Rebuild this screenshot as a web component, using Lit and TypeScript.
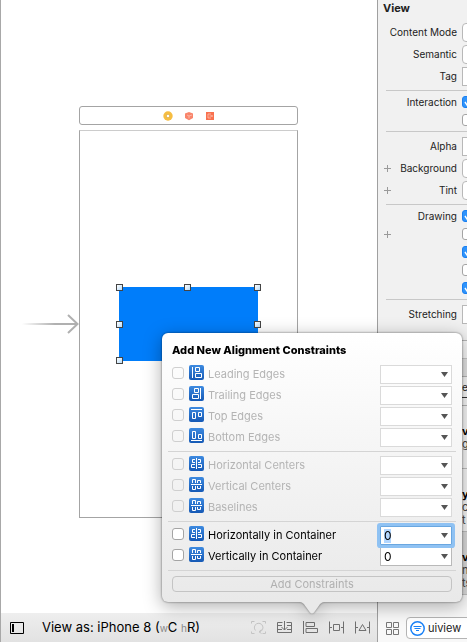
import { LitElement, html, css, svg, nothing } from "lit";
import { customElement, property } from "lit/decorators.js";

type Glyph = "leading" | "trailing" | "top" | "bottom" | "hcenter" | "vcenter";

const GLYPHS: Record<Glyph, string> = {
  leading: "M3.5 2V13M6.5 2.5H10.5V6.5H6.5ZM6.5 8.5H12.5V12.5H6.5Z",
  trailing: "M11.5 2V13M5.5 2.5H9.5V6.5H5.5ZM3.5 8.5H9.5V12.5H3.5Z",
  top: "M2 2.5H13M3.5 5.5H6.5V11.5H3.5ZM9.5 5.5H12.5V9.5H9.5Z",
  bottom: "M2 12.5H13M3.5 3.5H6.5V10.5H3.5ZM9.5 6.5H12.5V10.5H9.5Z",
  hcenter: "M7.5 2V13M6 3.5H3.5V6.5H6M6 8.5H2.5V11.5H6M9 3.5H11.5V6.5H9M9 8.5H12.5V11.5H9",
  vcenter: "M2 7.5H13M3.5 6V2.5H6.5V6M8.5 6V3.5H11.5V6M3.5 9V12.5H6.5V9M8.5 9V11.5H11.5V9",
};

interface Constraint {
  id: string;
  label: string;
  glyph: Glyph;
  value?: string;
  focused?: boolean;
}

const GROUPS: Constraint[][] = [
  [
    { id: "leading", label: "Leading Edges", glyph: "leading" },
    { id: "trailing", label: "Trailing Edges", glyph: "trailing" },
    { id: "top", label: "Top Edges", glyph: "top" },
    { id: "bottom", label: "Bottom Edges", glyph: "bottom" },
  ],
  [
    { id: "hcenters", label: "Horizontal Centers", glyph: "hcenter" },
    { id: "vcenters", label: "Vertical Centers", glyph: "vcenter" },
    { id: "baselines", label: "Baselines", glyph: "vcenter" },
  ],
  [
    { id: "hcontainer", label: "Horizontally in Container", glyph: "hcenter", value: "0", focused: true },
    { id: "vcontainer", label: "Vertically in Container", glyph: "vcenter", value: "0" },
  ],
];

const checkStyles = css`
  .check {
    appearance: none;
    box-sizing: border-box;
    flex: none;
    width: 12px;
    height: 12px;
    margin: 0;
    border: 1px solid #a4a4a4;
    border-radius: 3px;
    background: #fff;
  }
`;

@customElement("constraint-popover")
export class ConstraintPopover extends LitElement {
  static styles = [
    checkStyles,
    css`
      :host {
        display: block;
        filter: drop-shadow(0 0 1px rgba(0, 0, 0, 0.5)) drop-shadow(0 4px 9px rgba(0, 0, 0, 0.32));
        font-size: 11px;
        line-height: 14px;
        color: #000;
      }
      .panel {
        padding: 10px 6px;
        border-radius: 6px;
        background: linear-gradient(#fff, #f6f6f6 40%, #e9e9e9);
      }
      h2 {
        margin: 0 4px 7px;
        font-size: 11px;
        line-height: 14px;
        font-weight: 800;
        white-space: nowrap;
      }
      .group {
        padding-bottom: 3px;
        margin-bottom: 3px;
        border-bottom: 1px solid #d4d4d4;
      }
      .row {
        box-sizing: border-box;
        display: flex;
        align-items: flex-start;
        height: 21px;
        padding: 1px 4px;
      }
      .row label {
        display: flex;
        flex: 1;
        align-items: flex-start;
        gap: 4px;
        line-height: 18px;
        white-space: nowrap;
      }
      .row .check {
        margin: 2px 5px 0 0;
      }
      .off label {
        color: #b4b4b4;
      }
      .off .check {
        border-color: #cfcfcf;
        background: transparent;
      }
      .glyph {
        flex: none;
        width: 15px;
        height: 15px;
        border-radius: 2px;
        background: linear-gradient(#3d8ae0, #1559b5);
      }
      .combo {
        box-sizing: border-box;
        display: flex;
        align-items: center;
        width: 72px;
        height: 19px;
        border: 1px solid #b9b9b9;
        background: #fff;
        font-size: 12px;
      }
      .off .combo {
        border-color: #dadada;
      }
      .focused {
        border-color: #6aa7e0;
        border-radius: 1px;
        box-shadow: 0 0 0 3px #8fc2f3;
        position: relative;
      }
      .combo input {
        flex: 1;
        min-width: 0;
        padding: 0 3px;
        border: 0;
        outline: 0;
        background: none;
        font: inherit;
        color: #000;
      }
      .focused input {
        background: linear-gradient(#b3d7ff, #b3d7ff) 3px 0 / 7px 100% no-repeat;
      }
      .combo button {
        display: flex;
        padding: 0 3px;
        border: 0;
        background: none;
      }
      .add {
        display: block;
        box-sizing: border-box;
        width: calc(100% - 8px);
        height: 16px;
        margin: 5px 4px 0;
        padding: 0;
        border: 1px solid #c4c4c4;
        border-radius: 4px;
        background: none;
        font: inherit;
        color: #b0b0b0;
      }
      .group:last-of-type {
        margin-bottom: 0;
      }
      .tail {
        display: block;
        margin: 0 auto;
      }
    `,
  ];

  private row(c: Constraint) {
    const off = c.value === undefined;
    return html`
      <div class="row ${off ? "off" : ""}">
        <input class="check" type="checkbox" id=${c.id} ?disabled=${off} />
        <label for=${c.id}>
          <svg class="glyph" viewBox="0 0 15 15" aria-hidden="true">
            <path d=${GLYPHS[c.glyph]} fill="none" stroke="#fff" />
          </svg>
          ${c.label}
        </label>
        <div class="combo ${c.focused ? "focused" : ""}">
          <input type="text" aria-label="${c.label} value" .value=${c.value ?? ""} ?disabled=${off} />
          <button type="button" aria-label="${c.label} options" ?disabled=${off}>
            <svg width="7" height="5" viewBox="0 0 7 5"><path d="M0 0H7L3.5 5Z" fill="#555" /></svg>
          </button>
        </div>
      </div>
    `;
  }

  render() {
    return html`
      <div class="panel">
        <h2>Add New Alignment Constraints</h2>
        ${GROUPS.map((g) => html`<div class="group">${g.map((c) => this.row(c))}</div>`)}
        <button class="add" type="button" disabled>Add Constraints</button>
      </div>
      <svg class="tail" width="28" height="12" viewBox="0 0 28 12" aria-hidden="true">
        <path d="M0 0C5 0 6 2 8 5L12 10.500Q14 12.500 16 10.500L20 5C22 2 23 0 28 0Z" fill="#e9e9e9" />
      </svg>
    `;
  }
}

type Kind = "select" | "text" | "on" | "off";
interface Attribute {
  label?: string;
  kind: Kind;
  plus?: boolean;
}

const SECTIONS: Attribute[][] = [
  [
    { label: "Content Mode", kind: "select" },
    { label: "Semantic", kind: "select" },
    { label: "Tag", kind: "text" },
  ],
  [{ label: "Interaction", kind: "on" }, { kind: "off" }],
  [
    { label: "Alpha", kind: "text" },
    { label: "Background", kind: "select", plus: true },
    { label: "Tint", kind: "select", plus: true },
  ],
  [{ label: "Drawing", kind: "on" }, { kind: "off", plus: true }, { kind: "on" }, { kind: "off" }, { kind: "on" }],
  [{ label: "Stretching", kind: "text" }],
];

@customElement("attributes-inspector")
export class AttributesInspector extends LitElement {
  static styles = [
    checkStyles,
    css`
      :host {
        display: flex;
        flex-direction: column;
        overflow: hidden;
        border-left: 1px solid #a0a0a0;
        background: #f1f1f1;
        font-size: 10px;
        line-height: 14px;
        color: #222;
      }
      h1 {
        margin: 0;
        height: 18px;
        padding-left: 5px;
        font-size: 11px;
        line-height: 17px;
        font-weight: 700;
      }
      section {
        margin-left: 8px;
        padding: 3px 0;
        border-bottom: 1px solid #c8c8c8;
      }
      section.checks {
        padding: 2px 0;
      }
      section.last {
        border: 0;
      }
      .row {
        display: flex;
        align-items: center;
        height: 22px;
      }
      .checks .row {
        height: 18px;
      }
      .plus {
        display: flex;
        flex: none;
        width: 7px;
        margin-left: -2px;
        padding: 0;
        border: 0;
        background: none;
      }
      .row label {
        flex: 1;
        text-align: right;
        white-space: nowrap;
      }
      .slot {
        flex: none;
        display: flex;
        width: 5px;
        margin-left: 5px;
      }
      .field {
        box-sizing: border-box;
        flex: none;
        appearance: none;
        width: 120px;
        height: 19px;
        border: 1px solid #b8b8b8;
        background: #fff;
      }
      select.field {
        border-radius: 4px;
      }
      .on {
        border-color: #1a7ff0;
        background: #2e93fb;
      }
      .box {
        display: grid;
      }
      .box > * {
        grid-area: 1 / 1;
      }
      .library {
        margin-top: 12px;
        border-top: 1px solid #b5b5b5;
      }
      .bar {
        height: 17px;
        background: #f8f8f8;
        border-bottom: 1px solid #c8c8c8;
      }
      .tabs {
        height: 17px;
        background: #e4e4e4;
        border-bottom: 1px solid #b5b5b5;
      }
      .preview {
        height: 7px;
        background: #f8f8f8;
        border-bottom: 1px solid #b5b5b5;
      }
      .link {
        display: block;
        height: 20px;
        padding-left: 84px;
        line-height: 20px;
        border-bottom: 1px solid #333;
        background: #f8f8f8;
        color: inherit;
        text-decoration: none;
      }
      .item {
        box-sizing: border-box;
        height: 63px;
        padding: 19px 0 0 84px;
        border-bottom: 1px solid #c0c0c0;
        font-size: 11px;
        line-height: 13px;
        color: #444;
        background: #f8f8f8;
      }
      .item strong {
        display: block;
        color: #000;
      }
      .item span {
        display: block;
      }
      .chosen {
        background: #dcdcdc;
      }
      .filter {
        flex: 1;
        display: flex;
        align-items: flex-end;
        padding: 0 0 3px 8px;
        background: #f8f8f8;
      }
      .grid {
        display: flex;
        flex: none;
        margin-bottom: 4px;
        padding: 0;
        border: 0;
        background: none;
      }
      .search {
        box-sizing: border-box;
        flex: none;
        display: flex;
        align-items: center;
        gap: 3px;
        width: 180px;
        height: 22px;
        margin-left: 7px;
        padding-left: 3px;
        border: 1px solid #b4b4b4;
        border-radius: 4px;
        background: #fff;
        font-size: 11px;
      }
      .search input {
        width: 120px;
        padding: 0;
        border: 0;
        outline: 0;
        background: none;
        font: inherit;
        color: #222;
      }
    `,
  ];

  private control(a: Attribute, id: string) {
    if (a.kind === "select") return html`<select class="field" id=${id}></select>`;
    if (a.kind === "text") return html`<input class="field" type="text" id=${id} />`;
    return html`
      <span class="box">
        <input class="check ${a.kind}" type="checkbox" id=${id} aria-label=${a.label ?? "Option"} ?checked=${a.kind === "on"} />
        ${a.kind === "on"
          ? svg`<svg width="12" height="12" viewBox="0 0 12 12" aria-hidden="true"><path d="M3 6L5 9L9 3" fill="none" stroke="#fff" stroke-width="1.500"/></svg>`
          : nothing}
      </span>
    `;
  }

  render() {
    return html`
      <h1>View</h1>
      ${SECTIONS.map((rows, s) => {
        const checks = rows[0].kind === "on";
        return html`
          <section class="${checks ? "checks" : ""} ${s === SECTIONS.length - 1 ? "last" : ""}">
            ${rows.map((a, r) => {
              const id = `attr-${s}-${r}`;
              return html`
                <div class="row">
                  ${a.plus
                    ? html`<button class="plus" type="button" aria-label="Add variation">
                        <svg width="7" height="7" viewBox="0 0 7 7"><path d="M3.500 0V7M0 3.500H7" stroke="#9a9a9a" /></svg>
                      </button>`
                    : nothing}
                  <label for=${id}>${a.label ?? ""}</label>
                  <div class="slot">${this.control(a, id)}</div>
                </div>
              `;
            })}
          </section>
        `;
      })}
      <div class="library">
        <div class="bar"></div>
        <div class="tabs"></div>
        <a class="link" href="#">e</a>
        <div class="preview"></div>
      </div>
      <div class="item"><strong>v</strong><span>g</span></div>
      <div class="item"><strong>y</strong><span>c</span><span>t</span></div>
      <div class="item chosen"><strong>v</strong><span>n</span><span>ts</span></div>
      <div class="filter">
        <button class="grid" type="button" aria-label="Icon view">
          <svg width="13" height="13" viewBox="0 0 13 13">
            <path d="M.5 .5H5.500V5.500H.5ZM7.500 .5H12.500V5.500H7.500ZM.5 7.500H5.500V12.500H.5ZM7.500 7.500H12.500V12.500H7.500Z" fill="none" stroke="#777" />
          </svg>
        </button>
        <div class="search">
          <svg width="15" height="15" viewBox="0 0 15 15" aria-hidden="true">
            <circle cx="7.500" cy="7.500" r="6.700" fill="#fff" stroke="#1a82f7" stroke-width="1.500" />
            <path d="M3.500 5.500H11.500M4.500 7.500H10.500M6 9.500H9" stroke="#1a82f7" stroke-width="1.200" />
          </svg>
          <input type="text" aria-label="Filter library" value="uiview" />
        </div>
      </div>
    `;
  }
}

const TOOLS = [
  {
    name: "Update Frames",
    dim: true,
    d: "M.5 3.500V1.500H3.500M11.500 1.500H14.500V3.500M.5 11.500V13.500H3.500M11.500 13.500H14.500V11.500M4.500 10.500A4.300 4.300 0 1 1 8.500 11.800M10.500 9.500L8 11.800L10.500 13.500",
  },
  {
    name: "Embed In",
    d: "M5.500 2.500H.5V12.500H14.500V2.500H9.500M.5 5.500H5M10 5.500H14.500M.5 9.500H5M10 9.500H14.500M7.500 1V10M4.500 7L7.500 10L10.500 7",
  },
  { name: "Align", d: "M.5 1V14M3 2.500H11.500V6.500H3ZM3 8.500H14.500V12.500H3Z" },
  { name: "Add New Constraints", d: "M.5 1.500V13.500M14.500 1.500V13.500M.5 7.500H3M12 7.500H14.500M4.500 4.500H10.500V10.500H4.500Z" },
  { name: "Resolve Auto Layout Issues", d: "M.5 1.500V13.500M14.500 1.500V13.500M.5 7.500H3M12 7.500H14.500M7.500 4.500L11 10.500H4Z" },
];

@customElement("app-root")
export class AppRoot extends LitElement {
  @property() device = "iPhone 8";

  static styles = css`
    :host {
      display: block;
      font-family: Inter, "Liberation Sans", sans-serif;
    }
    .window {
      position: relative;
      box-sizing: border-box;
      display: grid;
      grid-template-columns: minmax(0, 1fr) 90px;
      min-height: 100vh;
      background: #fff;
      overflow: hidden;
    }
    .editor {
      display: flex;
      flex-direction: column;
      background: linear-gradient(#a8a8a8, #a8a8a8) 0 0 / 1px 100% no-repeat;
    }
    .canvas {
      flex: 1;
      display: flex;
      flex-direction: column;
      align-items: center;
      gap: 5px;
      padding: 106px 0 24px;
    }
    .dock {
      box-sizing: border-box;
      display: flex;
      justify-content: center;
      align-items: center;
      gap: 11px;
      width: 219px;
      height: 19px;
      border: 1px solid #a4a4a4;
      border-radius: 3px;
    }
    .scene {
      position: relative;
      box-sizing: border-box;
      display: grid;
      place-items: center;
      width: 219px;
      height: 388px;
      border: 1px solid #a4a4a4;
      border-top-color: #ccc;
    }
    .entry {
      position: absolute;
      right: 100%;
      top: 50%;
      margin-right: 1px;
      transform: translateY(-50%);
    }
    .subview {
      position: relative;
      width: 139px;
      height: 74px;
      background: #007dfa;
    }
    .handle {
      position: absolute;
      box-sizing: border-box;
      width: 7px;
      height: 7px;
      margin: -3px;
      border: 1px solid #444;
      background: linear-gradient(135deg, #fff, #b9dcf8);
    }
    .l { left: 0; }
    .c { left: 49%; }
    .r { right: 0; }
    .t { top: 0; }
    .m { top: 50%; }
    .b { bottom: 0; }
    .status {
      display: flex;
      align-items: center;
      height: 29px;
      margin-left: 1px;
      padding: 0 7px 0 9px;
      background: linear-gradient(#eee, #e2e2e2);
    }
    .status button {
      display: flex;
      flex: none;
      padding: 0;
      border: 0;
      background: none;
      font: inherit;
      color: inherit;
    }
    .status .device {
      display: block;
      margin-left: 18px;
      font-size: 13px;
      line-height: 16px;
      color: #000;
      white-space: nowrap;
    }
    small {
      font-size: 10px;
      color: #888;
    }
    .tools {
      display: flex;
      gap: 11px;
      margin-left: auto;
    }
    .popover {
      position: absolute;
      right: 5px;
      bottom: 28px;
      width: 300px;
    }
  `;

  render() {
    return html`
      <div class="window">
        <main class="editor">
          <div class="canvas">
            <div class="dock">
              <svg width="10" height="10" viewBox="0 0 10 10" aria-hidden="true">
                <circle cx="5" cy="5" r="4.700" fill="#f6bd41" /><path d="M3.500 3.500H6.500V6.500H3.500Z" fill="#fff" stroke="#d9a53a" stroke-width=".6" />
              </svg>
              <svg width="10" height="10" viewBox="0 0 10 10" aria-hidden="true">
                <path d="M5 1L9 2.500V7L5 9.200L1 7V2.500Z" fill="#f9856b" /><path d="M3 4L5 5L8 4M5 5V7.500" fill="none" stroke="#fbb5a5" />
              </svg>
              <svg width="10" height="10" viewBox="0 0 10 10" aria-hidden="true">
                <path d="M1 1H9V9H1Z" fill="#f9714f" /><path d="M6 3H3V7H6M4.500 5H7.500M6.500 4L7.500 5L6.500 6" fill="none" stroke="#fcc4b5" stroke-width=".8" />
              </svg>
            </div>
            <div class="scene">
              <svg class="entry" width="57" height="20" viewBox="0 0 57 20" aria-hidden="true">
                <defs>
                  <linearGradient id="fade"><stop offset="0" stop-color="#b0b0b0" stop-opacity="0" /><stop offset=".6" stop-color="#b0b0b0" /></linearGradient>
                </defs>
                <rect x="0" y="9" width="55" height="2" fill="url(#fade)" />
                <path d="M46 1L55.500 10L46 19" fill="none" stroke="#b0b0b0" stroke-width="2" />
              </svg>
              <div class="subview">
                ${["l t", "c t", "r t", "l m", "r m", "l b", "r b", "c b"].map((p) => html`<i class="handle ${p}"></i>`)}
              </div>
            </div>
          </div>
          <footer class="status">
            <button type="button" aria-label="Toggle outline">
              <svg width="14" height="12" viewBox="0 0 14 12"><path d="M.5 .5H13.500V11.500H.5Z" fill="none" stroke="#000" /><path d="M2 2H4V10H2Z" /></svg>
            </button>
            <button class="device" type="button">View as: ${this.device} (<small>w</small>C <small>h</small>R)</button>
            <div class="tools">
              ${TOOLS.map(
                (t) => html`<button type="button" aria-label=${t.name} ?disabled=${t.dim}>
                  <svg width="15" height="15" viewBox="0 0 15 15"><path d=${t.d} fill="none" stroke=${t.dim ? "#c4c4c4" : "#707070"} /></svg>
                </button>`
              )}
            </div>
          </footer>
        </main>
        <attributes-inspector></attributes-inspector>
        <constraint-popover class="popover"></constraint-popover>
      </div>
    `;
  }
}
